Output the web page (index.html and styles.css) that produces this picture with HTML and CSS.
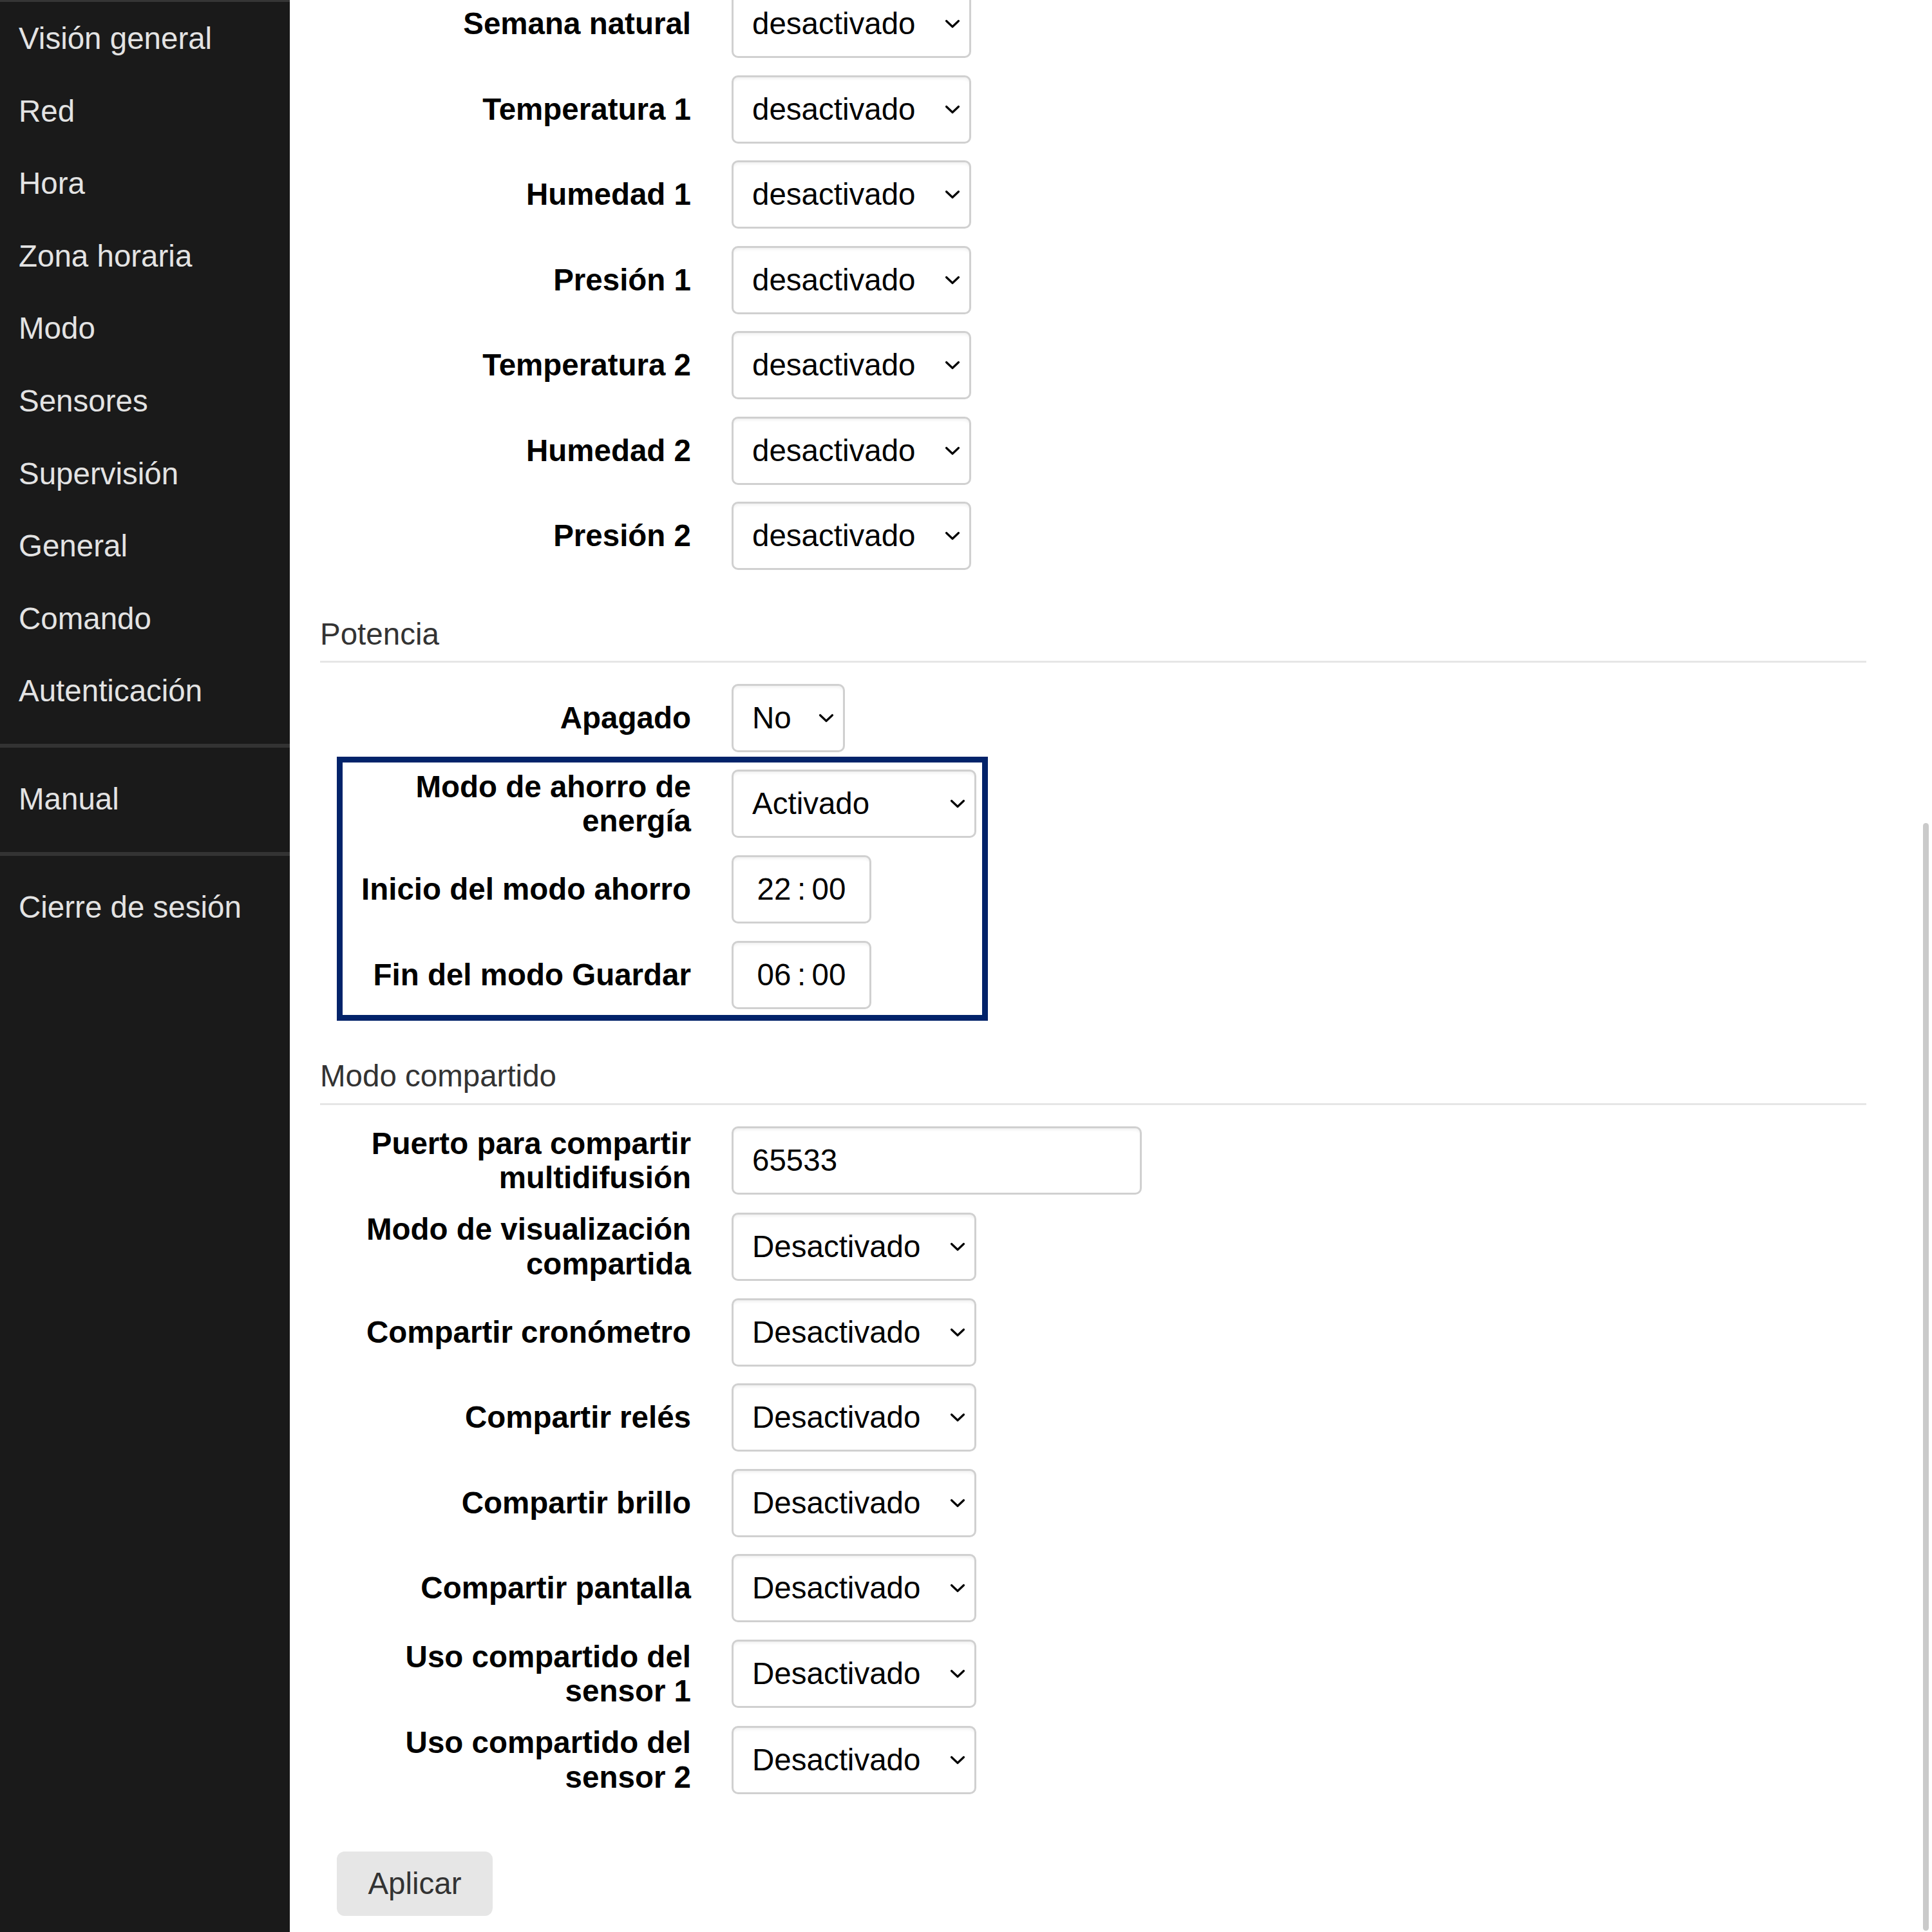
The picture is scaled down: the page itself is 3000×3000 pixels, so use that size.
FILE: index.html
```html
<!DOCTYPE html>
<html lang="es">
<head>
<meta charset="utf-8">
<title>Configuración</title>
<link rel="stylesheet" href="styles.css">
</head>
<body>
<div class="app">
  <aside class="sidebar">
    <div class="topbar"></div>
    <nav class="nav">
      <a>Visión general</a>
      <a>Red</a>
      <a>Hora</a>
      <a>Zona horaria</a>
      <a>Modo</a>
      <a>Sensores</a>
      <a>Supervisión</a>
      <a>General</a>
      <a>Comando</a>
      <a>Autenticación</a>
    </nav>
    <hr class="sep">
    <nav class="nav"><a>Manual</a></nav>
    <hr class="sep">
    <nav class="nav"><a>Cierre de sesión</a></nav>
  </aside>

  <main class="main">
    <div class="form">
      <div class="row"><label class="lbl">Semana natural</label><div class="sel w-a"><span>desactivado</span><svg class="chev" viewBox="0 0 24 14"><polyline points="2.5,2.5 12,11.5 21.5,2.5"/></svg></div></div>
      <div class="row"><label class="lbl">Temperatura 1</label><div class="sel w-a"><span>desactivado</span><svg class="chev" viewBox="0 0 24 14"><polyline points="2.5,2.5 12,11.5 21.5,2.5"/></svg></div></div>
      <div class="row"><label class="lbl">Humedad 1</label><div class="sel w-a"><span>desactivado</span><svg class="chev" viewBox="0 0 24 14"><polyline points="2.5,2.5 12,11.5 21.5,2.5"/></svg></div></div>
      <div class="row"><label class="lbl">Presión 1</label><div class="sel w-a"><span>desactivado</span><svg class="chev" viewBox="0 0 24 14"><polyline points="2.5,2.5 12,11.5 21.5,2.5"/></svg></div></div>
      <div class="row"><label class="lbl">Temperatura 2</label><div class="sel w-a"><span>desactivado</span><svg class="chev" viewBox="0 0 24 14"><polyline points="2.5,2.5 12,11.5 21.5,2.5"/></svg></div></div>
      <div class="row"><label class="lbl">Humedad 2</label><div class="sel w-a"><span>desactivado</span><svg class="chev" viewBox="0 0 24 14"><polyline points="2.5,2.5 12,11.5 21.5,2.5"/></svg></div></div>
      <div class="row"><label class="lbl">Presión 2</label><div class="sel w-a"><span>desactivado</span><svg class="chev" viewBox="0 0 24 14"><polyline points="2.5,2.5 12,11.5 21.5,2.5"/></svg></div></div>

      <h2 class="section">Potencia</h2>
      <div class="row"><label class="lbl">Apagado</label><div class="sel w-no"><span>No</span><svg class="chev" viewBox="0 0 24 14"><polyline points="2.5,2.5 12,11.5 21.5,2.5"/></svg></div></div>
      <div class="hl">
        <div class="row"><label class="lbl">Modo de ahorro de energía</label><div class="sel w-b"><span>Activado</span><svg class="chev" viewBox="0 0 24 14"><polyline points="2.5,2.5 12,11.5 21.5,2.5"/></svg></div></div>
        <div class="row"><label class="lbl">Inicio del modo ahorro</label><div class="sel time"><span>22</span><span class="colon">:</span><span>00</span></div></div>
        <div class="row"><label class="lbl">Fin del modo Guardar</label><div class="sel time"><span>06</span><span class="colon">:</span><span>00</span></div></div>
      </div>

      <h2 class="section">Modo compartido</h2>
      <div class="row"><label class="lbl">Puerto para compartir multidifusión</label><div class="sel text"><span>65533</span></div></div>
      <div class="row"><label class="lbl">Modo de visualización compartida</label><div class="sel w-b"><span>Desactivado</span><svg class="chev" viewBox="0 0 24 14"><polyline points="2.5,2.5 12,11.5 21.5,2.5"/></svg></div></div>
      <div class="row"><label class="lbl">Compartir cronómetro</label><div class="sel w-b"><span>Desactivado</span><svg class="chev" viewBox="0 0 24 14"><polyline points="2.5,2.5 12,11.5 21.5,2.5"/></svg></div></div>
      <div class="row"><label class="lbl">Compartir relés</label><div class="sel w-b"><span>Desactivado</span><svg class="chev" viewBox="0 0 24 14"><polyline points="2.5,2.5 12,11.5 21.5,2.5"/></svg></div></div>
      <div class="row"><label class="lbl">Compartir brillo</label><div class="sel w-b"><span>Desactivado</span><svg class="chev" viewBox="0 0 24 14"><polyline points="2.5,2.5 12,11.5 21.5,2.5"/></svg></div></div>
      <div class="row"><label class="lbl">Compartir pantalla</label><div class="sel w-b"><span>Desactivado</span><svg class="chev" viewBox="0 0 24 14"><polyline points="2.5,2.5 12,11.5 21.5,2.5"/></svg></div></div>
      <div class="row"><label class="lbl">Uso compartido del sensor 1</label><div class="sel w-b"><span>Desactivado</span><svg class="chev" viewBox="0 0 24 14"><polyline points="2.5,2.5 12,11.5 21.5,2.5"/></svg></div></div>
      <div class="row"><label class="lbl">Uso compartido del sensor 2</label><div class="sel w-b"><span>Desactivado</span><svg class="chev" viewBox="0 0 24 14"><polyline points="2.5,2.5 12,11.5 21.5,2.5"/></svg></div></div>

      <button class="btn">Aplicar</button>
    </div>
  </main>
  <div class="scrollbar"></div>
</div>
</body>
</html>
```

FILE: styles.css
```css
html, body {
  margin: 0;
  padding: 0;
  background: #ffffff;
}

body {
  font-family: "Liberation Sans", Arial, Helvetica, sans-serif;
  font-size: 47.5px;
  color: #000;
}

.app {
  display: grid;
  grid-template-columns: 450px 1fr;
  height: 3000px;
  overflow: hidden;
}

/* Sidebar */
.sidebar {
  background: #1a1a1a;
  height: 3000px;
}

.topbar {
  height: 3px;
  background: #363636;
  margin-bottom: 1px;
}

.nav {
  display: flex;
  flex-direction: column;
}

.nav a {
  display: block;
  color: #e3e3e3;
  line-height: 112.6px;
  padding-left: 29px;
  white-space: nowrap;
}

.sep {
  border: 0;
  height: 6px;
  background: #333333;
  margin: 25px 0 24px;
}

/* Main */
.main {
  padding: 0 102px 0 47px;
  min-width: 0;
}

.form {
  display: flex;
  flex-direction: column;
  margin-top: -16px;
}

.row {
  display: flex;
  align-items: center;
  gap: 63px;
  padding-left: 26px;
  margin-bottom: 26.5px;
}

.lbl {
  flex: 0 0 550px;
  width: 550px;
  text-align: right;
  font-weight: bold;
  line-height: 53.5px;
}

.sel {
  box-sizing: border-box;
  height: 106px;
  border: 3px solid #d0d0d0;
  border-radius: 10px;
  background: #fff;
  box-shadow: inset 0 4px 5px -2px rgba(0, 0, 0, 0.07);
  display: flex;
  align-items: center;
  justify-content: space-between;
  padding: 0 14px 0 29px;
  line-height: 53.5px;
  color: #000;
  flex-shrink: 0;
}

.w-a { width: 372px; }
.w-b { width: 380px; }
.w-no { width: 176px; }

.time {
  width: 217px;
  justify-content: center;
  padding: 0;
}

.colon {
  margin: 0 9.5px;
}

.text {
  width: 637px;
  justify-content: flex-start;
}

.chev {
  width: 24px;
  height: 14px;
  flex-shrink: 0;
}

.chev polyline {
  fill: none;
  stroke: #000;
  stroke-width: 3.2;
  stroke-linecap: round;
  stroke-linejoin: round;
}

.section {
  font-size: 47.5px;
  font-weight: normal;
  color: #333;
  line-height: 54.6px;
  margin: 46px 0 33px;
  padding-bottom: 14px;
  border-bottom: 3px solid #e6e6e6;
}

.hl {
  position: relative;
  padding-bottom: 5px;
}

.hl::after {
  content: "";
  position: absolute;
  top: -20px;
  left: 26px;
  width: 1011px;
  height: 410px;
  box-sizing: border-box;
  border: 9px solid #02236a;
  pointer-events: none;
}

.btn {
  align-self: flex-start;
  margin: 62px 0 0 26px;
  width: 242px;
  height: 100px;
  border: 0;
  border-radius: 12px;
  background: #e6e6e6;
  color: #333;
  font-family: "Liberation Sans", Arial, Helvetica, sans-serif;
  font-size: 47.5px;
  padding: 0;
}

.scrollbar {
  position: fixed;
  right: 5px;
  top: 1278px;
  bottom: 2px;
  width: 9px;
  border-radius: 5px;
  background: #cacaca;
}
```
